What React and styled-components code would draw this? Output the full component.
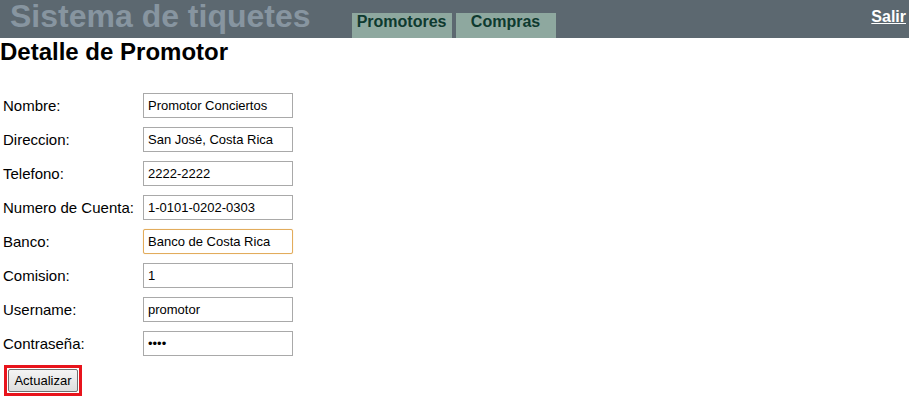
import React, { useEffect, useRef } from 'react'
import styled, { createGlobalStyle } from 'styled-components'

const GlobalStyle = createGlobalStyle`
  body {
    margin: 0;
    background: #ffffff;
    font-family: "Liberation Sans", Arial, sans-serif;
  }
`;

const Header = styled.div`
  display: flex;
  height: 38px;
  background-color: #5c6870;
`;

const Brand = styled.div`
  align-self: flex-start;
  padding-left: 10px;
  font-size: 32px;
  font-weight: bold;
  line-height: 33px;
  color: #8795a0;
  white-space: nowrap;
`;

const Tabs = styled.div`
  display: flex;
  gap: 4px;
  margin-left: 41px;
  align-self: flex-end;
`;

const Tab = styled.div`
  width: 100px;
  height: 25px;
  background-color: #8ea89f;
  color: #0e3a2f;
  font-size: 16px;
  font-weight: bold;
  line-height: 17px;
  text-align: center;
`;

const Logout = styled.a`
  margin-left: auto;
  margin-right: 3px;
  margin-top: 8px;
  align-self: flex-start;
  font-size: 16px;
  font-weight: bold;
  line-height: 17px;
  color: #ffffff;
  text-decoration: underline;
  cursor: pointer;
`;

const Title = styled.h2`
  margin: 0;
  font-size: 24px;
  font-weight: bold;
  color: #000000;
`;

const Form = styled.div`
  display: grid;
  grid-template-columns: 140px 150px;
  row-gap: 9px;
  align-items: center;
  padding: 27px 0 0 3px;
`;

const Label = styled.span`
  font-size: 15px;
  color: #000000;
`;

const Field = styled.input`
  box-sizing: border-box;
  width: 150px;
  height: 25px;
  margin: 0;
  padding: 0 4px;
  font-family: "Liberation Sans", Arial, sans-serif;
  font-size: 13px;
  color: #000000;
  border: 1px solid ${props => props.$active ? "#e2ac5c" : "#a9a9a9"};
  border-radius: ${props => props.$active ? "2px" : "0"};
  box-shadow: ${props => props.$active ? "0 0 1px #f0c890" : "none"};
  outline: none;
  caret-color: #000000;
`;

const ButtonFrame = styled.div`
  display: inline-block;
  margin: 9px 0 0 4px;
  padding: 1px;
  border: 3px solid #e8141c;
  line-height: 0;
`;

const Button = styled.button`
  box-sizing: border-box;
  width: 70px;
  height: 23px;
  padding: 0;
  font-family: "Liberation Sans", Arial, sans-serif;
  font-size: 13px;
  color: #000000;
  background: linear-gradient(#f4f4f4, #dedede);
  border: 1px solid #707070;
  border-radius: 2px;
  cursor: pointer;
`;

const fields = [
  { label: "Nombre:", value: "Promotor Conciertos" },
  { label: "Direccion:", value: "San José, Costa Rica" },
  { label: "Telefono:", value: "2222-2222" },
  { label: "Numero de Cuenta:", value: "1-0101-0202-0303" },
  { label: "Banco:", value: "Banco de Costa Rica", active: true },
  { label: "Comision:", value: "1" },
  { label: "Username:", value: "promotor" },
  { label: "Contraseña:", value: "1234", type: "password" },
];

const App = () => {
  const activeRef = useRef(null);

  useEffect(() => {
    const el = activeRef.current;
    if (el) {
      el.focus();
      el.setSelectionRange(el.value.length, el.value.length);
    }
  }, []);

  return (
    <>
      <GlobalStyle />
      <Header>
        <Brand>Sistema de tiquetes</Brand>
        <Tabs>
          <Tab>Promotores</Tab>
          <Tab>Compras</Tab>
        </Tabs>
        <Logout>Salir</Logout>
      </Header>
      <Title>Detalle de Promotor</Title>
      <Form>
        {fields.map((f) => (
          <React.Fragment key={f.label}>
            <Label>{f.label}</Label>
            <Field
              type={f.type || "text"}
              defaultValue={f.value}
              $active={f.active}
              ref={f.active ? activeRef : null}
            />
          </React.Fragment>
        ))}
      </Form>
      <ButtonFrame>
        <Button>Actualizar</Button>
      </ButtonFrame>
    </>
  )
}

export default App
